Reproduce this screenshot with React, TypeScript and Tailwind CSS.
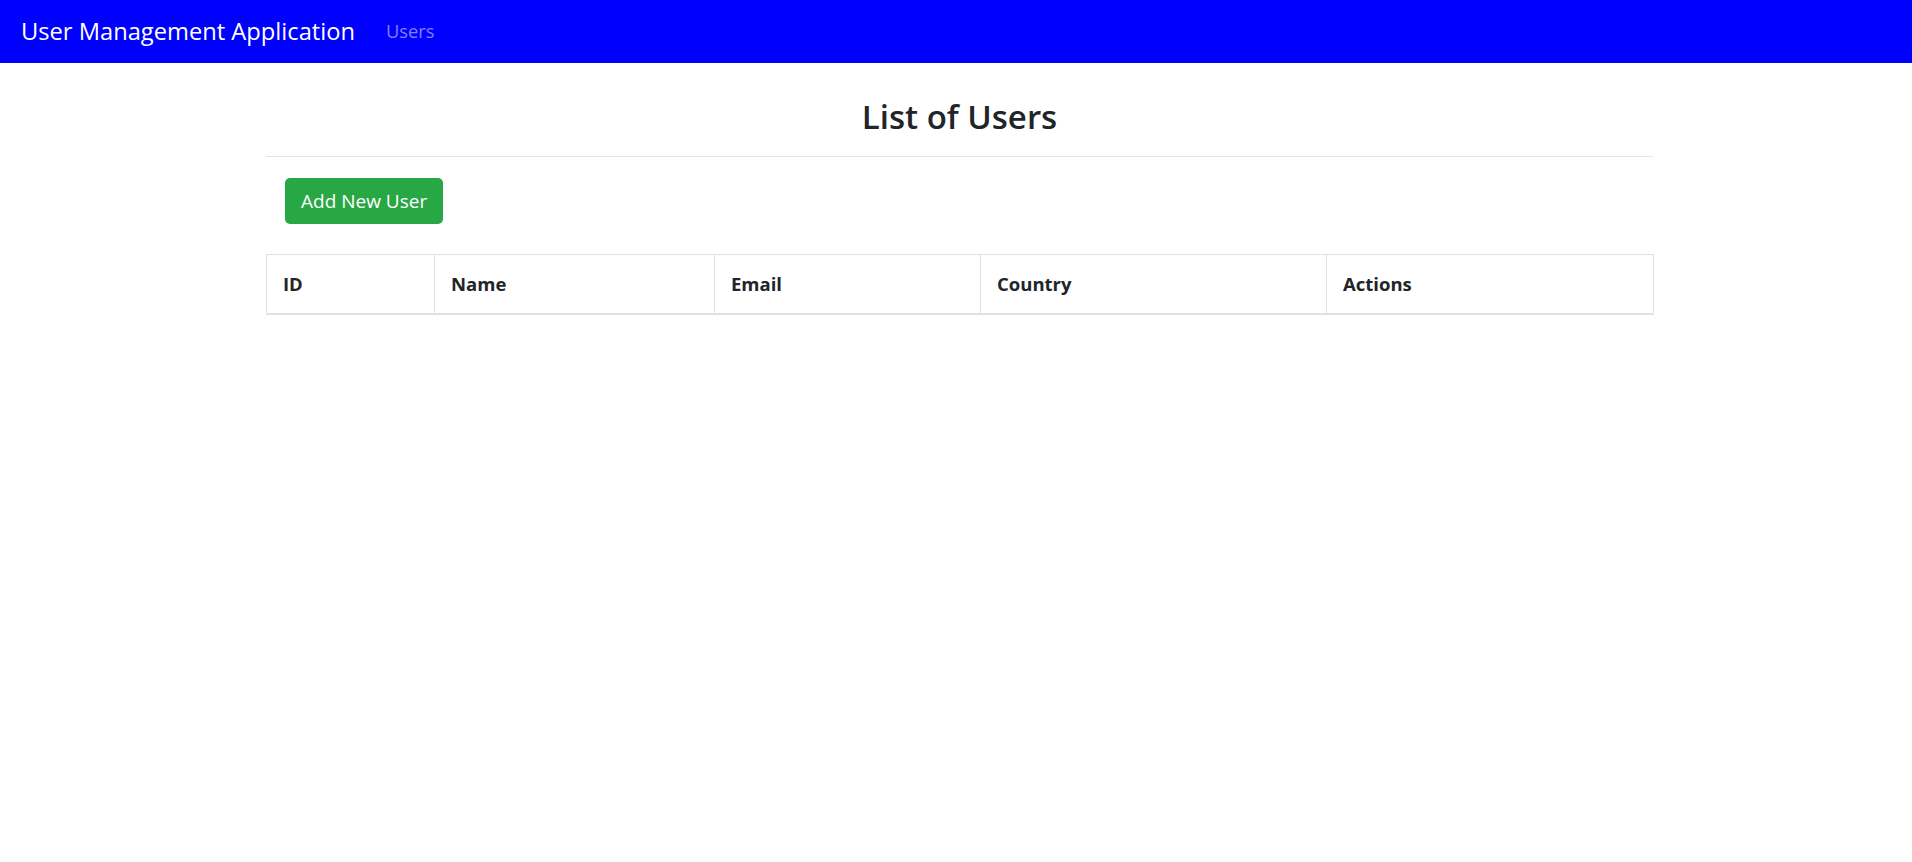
export default function App() {
  const cols = [
    { label: 'ID', w: 'w-[168px]' },
    { label: 'Name', w: 'w-[280px]' },
    { label: 'Email', w: 'w-[266px]' },
    { label: 'Country', w: 'w-[346px]' },
    { label: 'Actions', w: 'w-[327px]' },
  ];

  return (
    <div className="min-h-[862px] bg-white text-[#212529] font-['Open_Sans',sans-serif]">
      {/* Navbar */}
      <nav className="h-[63px] bg-[#0000ff] flex items-center pl-[21px]">
        <span className="text-[23.7px] text-white leading-none">User Management Application</span>
        <span className="ml-[31px] text-[18.3px] text-[#8080ff] leading-none">Users</span>
      </nav>

      <div className="ml-[266px] w-[1387px]">
        <h3 className="mt-[30px] text-center text-[33px] font-semibold leading-[48px]">List of Users</h3>
        <hr className="mt-[15px] border-t border-[#e5e5e5]" />

        <div className="pt-[21px] pl-[19px]">
          <button className="h-[46px] px-[16px] rounded-[5px] bg-[#28a745] text-white text-[19px]">
            Add New User
          </button>
        </div>

        <table className="mt-[30px] w-[1387px] border-collapse table-fixed">
          <thead>
            <tr>
              {cols.map((c) => (
                <th
                  key={c.label}
                  className={`${c.w} h-[59px] border border-[#dee2e6] border-b-2 px-[16px] text-left text-[18.5px] font-bold`}
                >
                  {c.label}
                </th>
              ))}
            </tr>
          </thead>
        </table>
      </div>
    </div>
  );
}
